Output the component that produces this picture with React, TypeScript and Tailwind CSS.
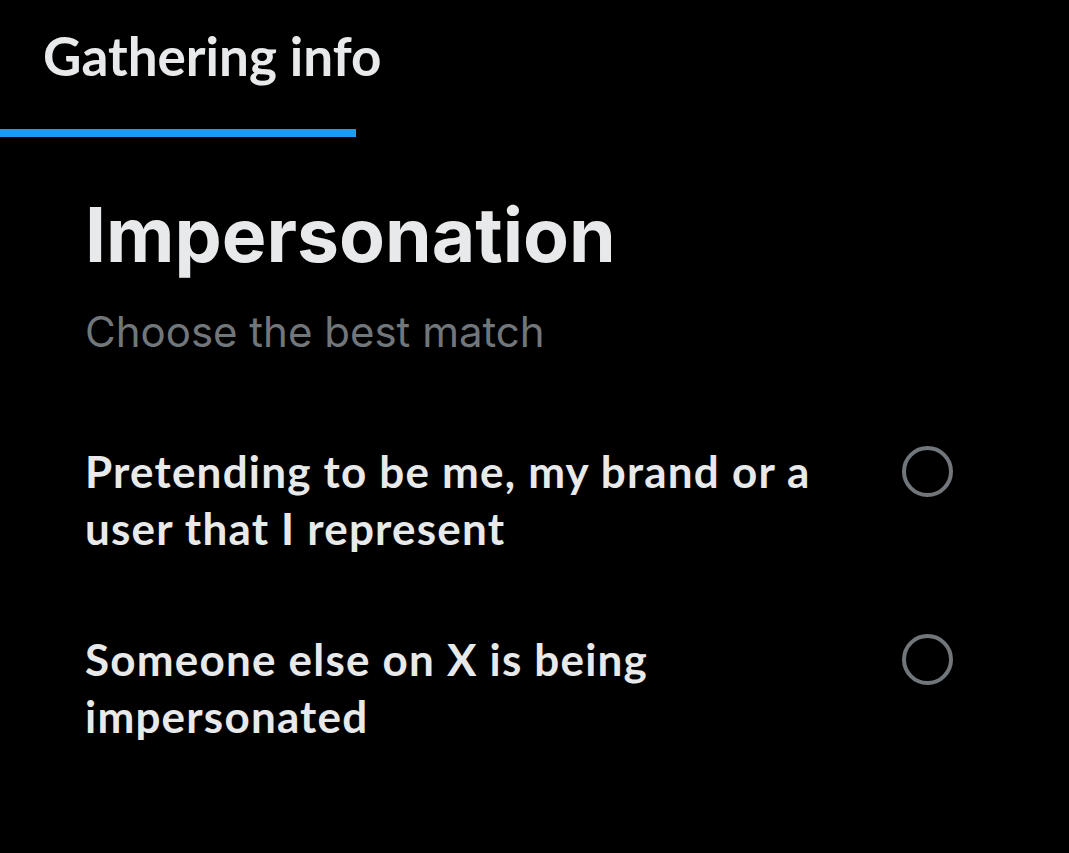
import React from "react";

function Radio() {
  return (
    <div className="w-[51px] h-[51px] rounded-full border-[4px] border-[#71767b] shrink-0" />
  );
}

function Option({ lines }: { lines: string[] }) {
  return (
    <div className="flex items-start justify-between pr-[116px]">
      <div
        className="text-[#e7e9ea] text-[44px] leading-[57px] font-bold tracking-[1.2px] whitespace-nowrap"
        style={{ fontFamily: "Lato, 'Liberation Sans', sans-serif" }}
      >
        {lines.map((l, i) => (
          <div key={i}>{l}</div>
        ))}
      </div>
      <div className="pt-[3px]">
        <Radio />
      </div>
    </div>
  );
}

export default function App() {
  return (
    <div className="w-[1069px] h-[853px] bg-black overflow-hidden">
      <div className="pt-[26px] pl-[43px] h-[129px]">
        <div
          className="text-[#e7e9ea] text-[53px] leading-[60px] font-bold"
          style={{ fontFamily: "Lato, 'Liberation Sans', sans-serif" }}
        >
          Gathering info
        </div>
      </div>
      <div className="w-[356px] h-[8px] bg-[#1d9bf0]" />
      <div className="pl-[85px]">
        <div
          className="mt-[53px] text-[#e7e9ea] text-[75px] leading-[90px] font-bold"
          style={{ fontFamily: "Inter, 'Liberation Sans', sans-serif" }}
        >
          Impersonation
        </div>
        <div
          className="mt-[27px] text-[#71767b] text-[42px] leading-[50px]"
          style={{ fontFamily: "Inter, 'Liberation Sans', sans-serif" }}
        >
          Choose the best match
        </div>
        <div className="mt-[86px] flex flex-col gap-[74px]">
          <Option lines={["Pretending to be me, my brand or a", "user that I represent"]} />
          <Option lines={["Someone else on X is being", "impersonated"]} />
        </div>
      </div>
    </div>
  );
}
